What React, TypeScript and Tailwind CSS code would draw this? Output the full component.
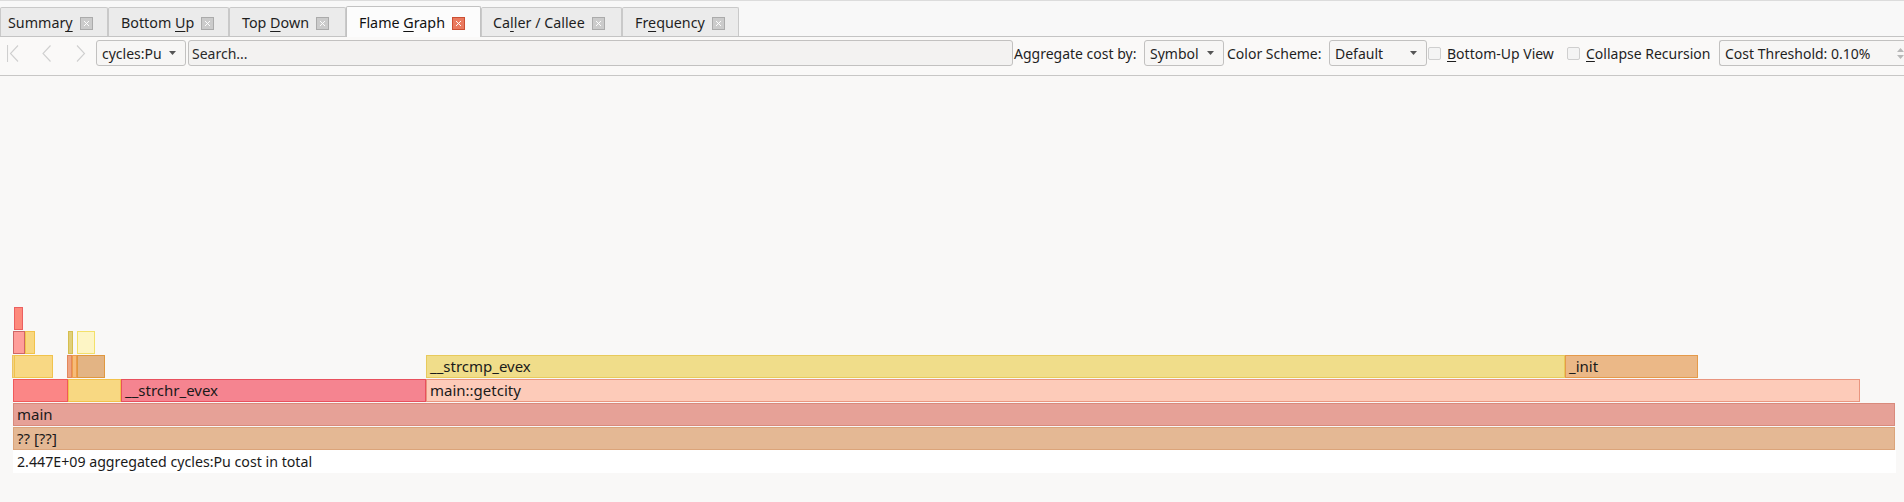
import { X } from "lucide-react";

type Frame = { x0: number; x1: number; fill: string; border: string; label?: string };

// pixel positions taken from the page, rows listed bottom-up
const rows: Frame[][] = [
  [{ x0: 13, x1: 1895, fill: "#e4b894", border: "#dba47a", label: "?? [??]" }],
  [{ x0: 13, x1: 1895, fill: "#e6a197", border: "#d98a7c", label: "main" }],
  [
    { x0: 13, x1: 68, fill: "#fb8686", border: "#f05a5a" },
    { x0: 68, x1: 121, fill: "#f8d882", border: "#f3c24a" },
    { x0: 121, x1: 426, fill: "#f58490", border: "#e8505e", label: "__strchr_evex" },
    { x0: 426, x1: 1860, fill: "#fdcbb9", border: "#e9957f", label: "main::getcity" },
  ],
  [
    { x0: 12, x1: 14, fill: "#f1d386", border: "#ecc461" },
    { x0: 14, x1: 53, fill: "#f8d884", border: "#f1c34c" },
    { x0: 67, x1: 72, fill: "#eea582", border: "#e4875a" },
    { x0: 72, x1: 77, fill: "#f6bc7a", border: "#ee9c4c" },
    { x0: 77, x1: 105, fill: "#e3b484", border: "#e0983f" },
    { x0: 426, x1: 1565, fill: "#f0dd8a", border: "#e8ca5c", label: "__strcmp_evex" },
    { x0: 1565, x1: 1698, fill: "#ebb887", border: "#e59a4a", label: "_init" },
  ],
  [
    { x0: 13, x1: 25, fill: "#ff9e9a", border: "#cf6666" },
    { x0: 25, x1: 35, fill: "#f8d780", border: "#f1c24a" },
    { x0: 68, x1: 73, fill: "#e0cf7a", border: "#d6be4e" },
    { x0: 77, x1: 95, fill: "#fdf5c5", border: "#f3e06a" },
  ],
  [{ x0: 14, x1: 23, fill: "#fd8a7c", border: "#ec6060" }],
];

type Tab = { before: string; key: string; after: string; w: string; pl: string; active?: boolean };

const tabs: Tab[] = [
  { before: "Summar", key: "y", after: "", w: "w-[108px]", pl: "pl-[7px]" },
  { before: "Bottom ", key: "U", after: "p", w: "w-[121px]", pl: "pl-[12px]" },
  { before: "Top ", key: "D", after: "own", w: "w-[117px]", pl: "pl-[12px]" },
  { before: "Flame ", key: "G", after: "raph", w: "w-[135px]", pl: "pl-[12px]", active: true },
  { before: "Ca", key: "l", after: "ler / Callee", w: "w-[141px]", pl: "pl-[11px]" },
  { before: "Fr", key: "e", after: "quency", w: "w-[117px]", pl: "pl-[12px]" },
];

function Arrow() {
  return (
    <svg width="7" height="4" viewBox="0 0 7 4" className="shrink-0">
      <path d="M0 0h7L3.5 4z" fill="#555" />
    </svg>
  );
}

function Combo({ text, w }: { text: string; w: string }) {
  return (
    <div className={`${w} h-[26px] shrink-0 flex items-center justify-between pl-[5px] pr-[9px] bg-[#f7f6f5] border border-[#c2c1c0] rounded-[3px]`}>
      <span>{text}</span>
      <Arrow />
    </div>
  );
}

function Check({ key_, after }: { key_: string; after: string }) {
  return (
    <div className="h-[26px] flex items-center shrink-0">
      <div className="w-[13px] h-[13px] bg-[#f4f4f4] border border-[#cfcfcf] rounded-[2px] mr-[6px]" />
      <span>
        <span className="underline underline-offset-2">{key_}</span>
        {after}
      </span>
    </div>
  );
}

export default function App() {
  return (
    <div className="w-[1904px] h-[502px] flex flex-col bg-[#f9f8f7] text-[14px] text-[#1f1f1f] overflow-hidden" style={{ fontFamily: '"Noto Sans", "DejaVu Sans", sans-serif' }}>
      {/* TABS */}
      <div className="h-[37px] shrink-0 flex items-end border-t border-[#dcdcdc] bg-[#f8f8f8] border-b border-b-[#c4c4c4]">
        {tabs.map((t) => (
          <div
            key={t.before}
            className={`${t.w} ${t.pl} shrink-0 flex items-center border-x border-t rounded-t-[2px] ${
              t.active ? "h-[31px] -mb-px pt-[2px] bg-[#fcfcfc] border-[#c2c2c2] text-[#111]" : "h-[29px] bg-[#ebebeb] border-[#c9c9c9] pt-[3px]"
            }`}
          >
            <span className="leading-none text-[14.3px]">
              {t.before}
              <span className="underline underline-offset-[3px]">{t.key}</span>
              {t.after}
            </span>
            <div
              className={`ml-[7px] w-[13px] h-[13px] flex items-center justify-center border ${
                t.active ? "bg-[#ea7a5f] border-[#cc4f33]" : "bg-[#cbcbcb] border-[#ababab]"
              }`}
            >
              <X size={9} strokeWidth={2.5} color="#fff" />
            </div>
          </div>
        ))}
      </div>

      {/* TOOLBAR */}
      <div className="h-[39px] shrink-0 flex items-start pt-[3px] bg-[#faf9f8] border-b border-[#c8c7c6] whitespace-nowrap">
        <div className="h-[26px] flex items-center pl-[7px] w-[96px] shrink-0 text-[#cfcfcf]">
          <svg width="14" height="17" viewBox="0 0 14 17" fill="none" stroke="currentColor" strokeWidth="1.1">
            <path d="M0.5 0v17M11 0.5L3.5 8.5l7.5 8" />
          </svg>
          <svg width="10" height="17" viewBox="0 0 10 17" fill="none" stroke="currentColor" strokeWidth="1.1" className="ml-[21px]">
            <path d="M8.5 0.5L1 8.5l7.5 8" />
          </svg>
          <svg width="10" height="17" viewBox="0 0 10 17" fill="none" stroke="currentColor" strokeWidth="1.1" className="ml-[24px]">
            <path d="M1 0.5l7.5 8-7.5 8" />
          </svg>
        </div>
        <Combo text="cycles:Pu" w="w-[90px]" />
        <div className="ml-[2px] w-[825px] h-[26px] shrink-0 flex items-center pl-[3px] bg-[#f3f2f1] border border-[#c2c1c0] rounded-[3px] text-[#2a2a2a]">
          Search...
        </div>
        <span className="ml-[1px] w-[130px] h-[26px] flex items-center shrink-0">Aggregate cost by:</span>
        <Combo text="Symbol" w="w-[80px]" />
        <span className="ml-[3px] w-[102px] h-[26px] flex items-center shrink-0">Color Scheme:</span>
        <Combo text="Default" w="w-[98px]" />
        <div className="ml-[1px] w-[139px] shrink-0">
          <Check key_="B" after="ottom-Up View" />
        </div>
        <div className="w-[152px] shrink-0">
          <Check key_="C" after="ollapse Recursion" />
        </div>
        <div className="flex-1 h-[26px] flex items-center justify-between pl-[5px] bg-[#f7f6f5] border border-[#c2c1c0] border-r-0 rounded-l-[3px]">
          <span>Cost Threshold: 0.10%</span>
          <div className="flex flex-col items-center w-[7px] gap-[3px] text-[#b8b8b8]">
            <svg width="7" height="4" viewBox="0 0 7 4"><path d="M0 4L3.5 0 7 4z" fill="currentColor" /></svg>
            <svg width="7" height="4" viewBox="0 0 7 4"><path d="M0 0h7L3.5 4z" fill="currentColor" /></svg>
          </div>
        </div>
      </div>

      {/* FLAME GRAPH */}
      <div className="flex-1 flex flex-col justify-end pb-[29px]">
        <div className="flex flex-col-reverse">
          {rows.map((row, i) => (
            <div key={i} className="relative h-[24px] shrink-0">
              {row.map((f) => (
                <div
                  key={f.x0}
                  className="absolute top-0 h-[23px] border flex items-center overflow-hidden whitespace-nowrap pl-[3px] text-[15px] text-[#1a1a1a]"
                  style={{ left: f.x0, width: f.x1 - f.x0, background: f.fill, borderColor: f.border }}
                >
                  {f.label}
                </div>
              ))}
            </div>
          ))}
        </div>
        <div className="ml-[13px] w-[1883px] h-[23px] -mt-px bg-white flex items-center pl-[4px] text-[14.2px] text-[#1a1a1a]">
          2.447E+09 aggregated cycles:Pu cost in total
        </div>
      </div>
    </div>
  );
}
